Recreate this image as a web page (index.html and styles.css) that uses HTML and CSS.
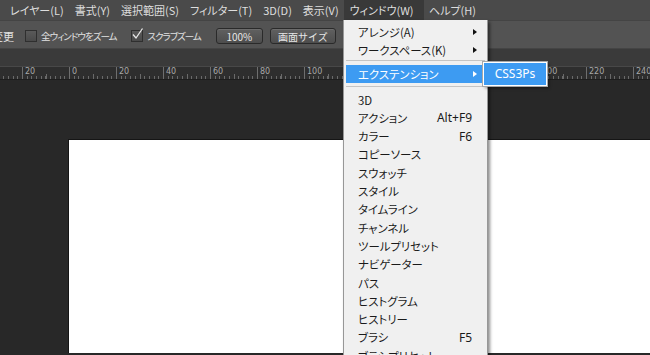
FILE: index.html
```html
<!DOCTYPE html>
<html lang="ja">
  <head>
    <meta charset="UTF-8" />
    <title>Photoshop - ウィンドウ メニュー</title>
    <link rel="stylesheet" href="styles.css">
  </head>
  <body>
    <div class="menubar">
      <span class="mitem">レイヤー(L)</span>
      <span class="mitem">書式(Y)</span>
      <span class="mitem">選択範囲(S)</span>
      <span class="mitem">フィルター(T)</span>
      <span class="mitem">3D(D)</span>
      <span class="mitem">表示(V)</span>
      <span class="mitem open">ウィンドウ(W)</span>
      <span class="mitem">ヘルプ(H)</span>
    </div>

    <div class="optbar">
      <span class="cut">変更</span>
      <label class="check"><span class="box"></span>全ウィンドウをズーム</label>
      <label class="check">
        <span class="box">
          <svg width="13" height="14" viewBox="0 0 13 14"><path d="M2 7.5 L5 11 L11.5 1.5" fill="none" stroke="#e8e8e8" stroke-width="1.3"/></svg>
        </span>スクラブズーム
      </label>
      <button class="btn w100">100%</button>
      <button class="btn wfit">画面サイズ</button>
      <button class="btn wfill">画面にフィット</button>
    </div>

    <div class="tabband"></div>

    <div class="ruler">
      <span class="seg"><i>40</i></span>
      <span class="seg"><i>20</i></span>
      <span class="seg"><i>0</i></span>
      <span class="seg"><i>20</i></span>
      <span class="seg"><i>40</i></span>
      <span class="seg"><i>60</i></span>
      <span class="seg"><i>80</i></span>
      <span class="seg"><i>100</i></span>
      <span class="seg"><i>120</i></span>
      <span class="seg"><i>140</i></span>
      <span class="seg"><i>160</i></span>
      <span class="seg"><i>180</i></span>
      <span class="seg"><i>200</i></span>
      <span class="seg"><i>220</i></span>
      <span class="seg"><i>240</i></span>
    </div>

    <div class="workspace">
      <div class="canvas"></div>
    </div>

    <!-- open window menu -->
    <div class="dropdown">
      <div class="row">アレンジ(A)<span class="arrow"></span></div>
      <div class="row">ワークスペース(K)<span class="arrow"></span></div>
      <div class="sep first"></div>
      <div class="row hl">エクステンション<span class="arrow white"></span></div>
      <div class="sep"></div>
      <div class="row">3D</div>
      <div class="row">アクション<span class="key">Alt+F9</span></div>
      <div class="row">カラー<span class="key">F6</span></div>
      <div class="row">コピーソース</div>
      <div class="row">スウォッチ</div>
      <div class="row">スタイル</div>
      <div class="row">タイムライン</div>
      <div class="row">チャンネル</div>
      <div class="row">ツールプリセット</div>
      <div class="row">ナビゲーター</div>
      <div class="row">パス</div>
      <div class="row">ヒストグラム</div>
      <div class="row">ヒストリー</div>
      <div class="row">ブラシ<span class="key">F5</span></div>
      <div class="row">ブラシプリセット</div>
    </div>

    <div class="submenu">CSS3Ps</div>
  </body>
</html>
```

FILE: styles.css
```css
* {
  margin: 0;
  padding: 0;
  box-sizing: border-box;
}

body {
  width: 650px;
  height: 355px;
  overflow: hidden;
  position: relative;
  background-color: #282828;
  font-family: "Noto Sans CJK JP", "Noto Sans", sans-serif;
  font-feature-settings: "palt";
}

/* top menu bar */
.menubar {
  display: flex;
  height: 20px;
  padding-left: 4.5px;
  background-color: #4a4a4a;
}

.mitem {
  padding: 0 5.5px;
  color: #dedede;
  font-size: 11px;
  line-height: 20px;
  white-space: nowrap;
}

.mitem.open {
  padding-right: 10px;
  background-color: #393939;
}

/* options bar */
.optbar {
  display: flex;
  align-items: center;
  height: 28px;
  padding-top: 2px;
  background-color: #535353;
  border-top: 1px solid #444;
  color: #e2e2e2;
  font-size: 9.5px;
  letter-spacing: -1px;
  white-space: nowrap;
}

.cut {
  margin-left: -8px;
  margin-right: 11px;
  font-size: 11px;
  letter-spacing: 0;
}

.check {
  display: flex;
  align-items: center;
  margin-right: 15px;
}

.box {
  position: relative;
  flex: none;
  width: 12px;
  height: 12px;
  margin-right: 4px;
  background: linear-gradient(#5a5a5a, #4a4a4a);
  border: 1px solid #2f2f2f;
}

.box svg {
  position: absolute;
  left: -1px;
  top: -4px;
}

.btn {
  flex: none;
  height: 16px;
  margin-right: 7px;
  color: #e6e6e6;
  font-family: inherit;
  font-size: 10px;
  letter-spacing: 0;
  border: 1px solid #2a2a2a;
  border-radius: 3px;
  background: linear-gradient(#606060, #4d4d4d);
  box-shadow: inset 0 1px 0 #6c6c6c;
}

.w100 {
  width: 47px;
}

.wfit {
  width: 66px;
}

.wfill {
  width: 90px;
}

.tabband {
  height: 18px;
  background-color: #3a3a3a;
  border-top: 1px solid #444;
}

/* ruler */
.ruler {
  display: flex;
  height: 14px;
  margin-left: -25px;
  background-color: #2e2e2e;
  border-top: 1px solid #484848;
  border-bottom: 1px solid #1d1d1d;
}

.seg {
  position: relative;
  flex: none;
  width: 47px;
  height: 100%;
  border-left: 1px solid #6e6e6e;
  background: repeating-linear-gradient(to right, transparent 0 3.7px, #6a6a6a 3.7px 4.7px) bottom left / 100% 3px no-repeat;
}

.seg::after {
  content: "";
  position: absolute;
  left: 23px;
  bottom: 0;
  width: 1px;
  height: 5px;
  background-color: #6a6a6a;
}

.seg i {
  display: block;
  padding-left: 2px;
  color: #a8a8a8;
  font-family: "DejaVu Sans", sans-serif;
  font-style: normal;
  font-size: 8px;
  line-height: 10px;
}

.workspace {
  padding: 59px 0 0 68px;
}

.canvas {
  height: 214px;
  background-color: #fff;
  border-left: 1px solid #151515;
  border-top: 1px solid #151515;
}

/* window menu */
.dropdown {
  position: absolute;
  left: 343px;
  top: 20px;
  width: 145px;
  height: 335px;
  overflow: hidden;
  padding: 2.5px 2px 0;
  background-color: #f0f0f0;
  border: 1px solid #979797;
  border-top: none;
  border-bottom: none;
  box-shadow: 2px 2px 3px rgba(0, 0, 0, 0.45);
  color: #1a1a1a;
  font-size: 11.4px;
}

.row {
  position: relative;
  display: flex;
  justify-content: space-between;
  align-items: center;
  height: 18.3px;
  padding: 0 13px 0 12px;
  white-space: nowrap;
}

.row.hl {
  background-color: #3d9bf2;
  color: #fff;
}

.key {
  font-family: "Noto Sans", sans-serif;
  font-size: 12px;
}

.arrow {
  position: absolute;
  right: 8px;
  top: 6px;
  border-left: 4px solid #111;
  border-top: 3.5px solid transparent;
  border-bottom: 3.5px solid transparent;
}

.arrow.white {
  border-left-color: #fff;
}

.sep {
  height: 1px;
  margin: 1px 0 4px;
  background-color: #c4c4c4;
}

.hl + .sep {
  margin: 3px 0;
}

.submenu {
  position: absolute;
  left: 483px;
  top: 62px;
  width: 64px;
  height: 24px;
  background-color: #3d9bf2;
  border: 1px solid #fff;
  outline: 1px solid #a8a8a8;
  box-shadow: 2px 2px 3px rgba(0, 0, 0, 0.45);
  color: #fff;
  font-family: "Noto Sans", sans-serif;
  font-size: 12px;
  line-height: 22px;
  text-align: center;
}
```
